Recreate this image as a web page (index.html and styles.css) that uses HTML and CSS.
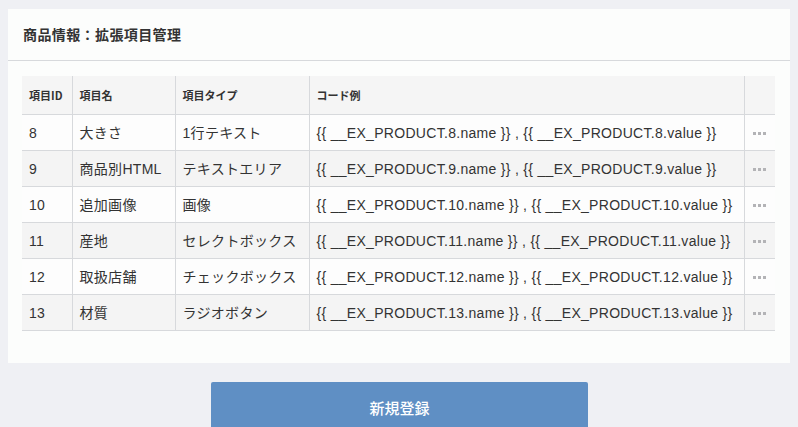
FILE: index.html
```html
<!DOCTYPE html>
<html lang="ja">
<head>
<meta charset="utf-8">
<title>商品情報：拡張項目管理</title>
<link rel="stylesheet" href="styles.css">
</head>
<body>
<div class="card">
  <div class="card-header"><h1 class="title">商品情報：拡張項目管理</h1></div>
  <div class="card-body">
    <table class="grid">
      <colgroup>
        <col class="c-id"><col class="c-name"><col class="c-type"><col class="c-code"><col class="c-act">
      </colgroup>
      <thead>
        <tr><th>項目ID</th><th>項目名</th><th>項目タイプ</th><th>コード例</th><th></th></tr>
      </thead>
      <tbody>
        <tr><td>8</td><td>大きさ</td><td>1行テキスト</td><td>{{ __EX_PRODUCT.8.name }} , {{ __EX_PRODUCT.8.value }}</td><td class="act"><span class="dots"><i></i><i></i><i></i></span></td></tr>
        <tr><td>9</td><td>商品別HTML</td><td>テキストエリア</td><td>{{ __EX_PRODUCT.9.name }} , {{ __EX_PRODUCT.9.value }}</td><td class="act"><span class="dots"><i></i><i></i><i></i></span></td></tr>
        <tr><td>10</td><td>追加画像</td><td>画像</td><td>{{ __EX_PRODUCT.10.name }} , {{ __EX_PRODUCT.10.value }}</td><td class="act"><span class="dots"><i></i><i></i><i></i></span></td></tr>
        <tr><td>11</td><td>産地</td><td>セレクトボックス</td><td>{{ __EX_PRODUCT.11.name }} , {{ __EX_PRODUCT.11.value }}</td><td class="act"><span class="dots"><i></i><i></i><i></i></span></td></tr>
        <tr><td>12</td><td>取扱店舗</td><td>チェックボックス</td><td>{{ __EX_PRODUCT.12.name }} , {{ __EX_PRODUCT.12.value }}</td><td class="act"><span class="dots"><i></i><i></i><i></i></span></td></tr>
        <tr><td>13</td><td>材質</td><td>ラジオボタン</td><td>{{ __EX_PRODUCT.13.name }} , {{ __EX_PRODUCT.13.value }}</td><td class="act"><span class="dots"><i></i><i></i><i></i></span></td></tr>
      </tbody>
    </table>
  </div>
</div>
<div class="actions">
  <button class="btn-primary" type="button">新規登録</button>
</div>
</body>
</html>
```
FILE: styles.css
```css
html, body {
  margin: 0;
  padding: 0;
}
body {
  background: #eff0f4;
  font-family: "Liberation Sans", "Noto Sans CJK JP", sans-serif;
  color: #333;
  padding: 9px 8px 0 8px;
  overflow: hidden;
  height: 427px;
  box-sizing: border-box;
}
.card {
  background: #fcfdfc;
}
.card-header {
  height: 52px;
  border-bottom: 1px solid #d7d9dc;
  box-sizing: border-box;
  display: flex;
  align-items: center;
  padding: 0 15px 2px 15px;
}
.title {
  margin: 0;
  font-family: "Noto Sans CJK JP", sans-serif;
  font-size: 14px;
  letter-spacing: 0.4px;
  font-weight: bold;
  color: #333;
  line-height: 1;
}
.card-body {
  padding: 15px 15px 32px 14px;
}
.grid {
  width: 753px;
  border-collapse: collapse;
  table-layout: fixed;
  font-size: 14px;
}
.c-id { width: 50px; }
.c-name { width: 103px; }
.c-type { width: 134px; }
.c-code { width: 435px; }
.c-act { width: 31px; }
.grid th {
  height: 38px;
  background: #f5f5f5;
  font-family: "Noto Sans CJK JP", sans-serif;
  font-size: 11px;
  font-weight: bold;
  text-align: left;
  padding: 0 0 0 7px;
  border-bottom: 1px solid #d7d9dc;
  border-left: 1px solid #d7d9dc;
  color: #333;
  white-space: nowrap;
}
.grid th:first-child,
.grid td:first-child { border-left: none; }
.grid td {
  height: 36px;
  padding: 0 0 0 7px;
  border-bottom: 1px solid #d7d9dc;
  border-left: 1px solid #d7d9dc;
  white-space: nowrap;
  box-sizing: border-box;
  line-height: 1;
  letter-spacing: 0.3px;
}
.grid tbody tr:nth-child(even) td {
  background: #f4f4f4;
}
.grid tbody tr:nth-child(odd) td {
  background: #fdfdfd;
}
.grid td.act {
  padding: 0;
  text-align: center;
}
.dots {
  display: inline-flex;
  gap: 2px;
  vertical-align: middle;
}
.dots i {
  display: block;
  width: 3px;
  height: 3px;
  background: #b3b3b6;
}
.actions {
  display: flex;
  justify-content: center;
  padding-top: 19px;
}
.btn-primary {
  width: 377px;
  height: 50px;
  border: none;
  border-radius: 2px;
  background: #5f8fc4;
  color: #fff;
  font-family: "Noto Sans CJK JP", sans-serif;
  font-size: 15px;
  font-weight: 500;
  margin-left: 1px;
}
```
